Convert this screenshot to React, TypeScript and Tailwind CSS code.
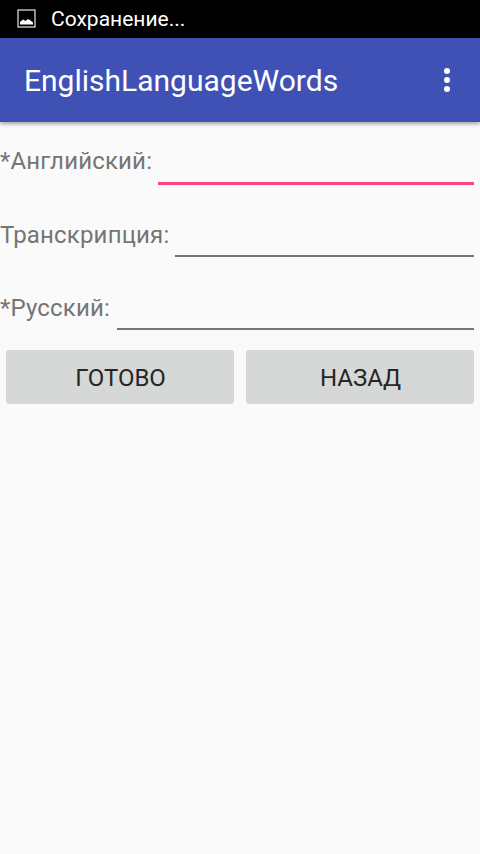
export default function App() {
  const rows = [
    { label: "*Английский:", line: "h-[3px] bg-[#FF4081]", h: "h-[63px]", pad: "pb-[12px]", gap: "ml-[6px]" },
    { label: "Транскрипция:", line: "h-[2px] bg-[#757575]", h: "h-[72px]", pad: "pb-[10px]", gap: "ml-[6px]" },
    { label: "*Русский:", line: "h-[2px] bg-[#757575]", h: "h-[73px]", pad: "pb-[10px]", gap: "ml-[7px]" },
  ];
  return (
    <div className="w-[480px] h-[854px] bg-[#FAFAFA] flex flex-col overflow-hidden font-['Roboto',sans-serif]">
      <div className="h-[38px] bg-black flex items-center pl-[17px] shrink-0">
        <svg width="20" height="20" viewBox="0 0 20 20" className="shrink-0">
          <rect x="1" y="1" width="17" height="17" fill="none" stroke="#e8e8e8" strokeWidth="1.2" />
          <path d="M3 15.5 V13 L6 10.5 L8.5 12 L11 10 L13.5 11.5 L16 13.5 V15.5 Z" fill="#fff" />
        </svg>
        <span className="ml-[14px] text-white text-[21px] leading-none">Сохранение...</span>
      </div>
      <div className="h-[84px] bg-[#3F51B5] flex items-center justify-between pl-[24px] pr-[27px] shrink-0 relative shadow-[0_2px_4px_rgba(0,0,0,0.35)]">
        <span className="text-white text-[30px] leading-none pt-[2px]">EnglishLanguageWords</span>
        <svg width="12" height="26" viewBox="0 0 12 26">
          <circle cx="6" cy="4" r="3" fill="#fff" />
          <circle cx="6" cy="13" r="3" fill="#fff" />
          <circle cx="6" cy="22" r="3" fill="#fff" />
        </svg>
      </div>
      <div className="flex flex-col pr-[6px]">
        {rows.map((r) => (
          <div key={r.label} className={`flex items-end ${r.h}`}>
            <span className={`text-[24px] leading-none tracking-[0.17px] text-[#757575] whitespace-nowrap ${r.pad}`}>{r.label}</span>
            <div className={`flex-1 ${r.gap} ${r.line}`} />
          </div>
        ))}
      </div>
      <div className="flex gap-[12px] px-[6px] mt-[20px]">
        <button className="flex-1 h-[54px] rounded-[3px] bg-[#D6D7D7] text-[24px] text-[#262626] leading-none pl-[1px] pt-[1px]">ГОТОВО</button>
        <button className="flex-1 h-[54px] rounded-[3px] bg-[#D6D7D7] text-[24px] text-[#262626] leading-none pl-[1px] pt-[1px]">НАЗАД</button>
      </div>
    </div>
  );
}
